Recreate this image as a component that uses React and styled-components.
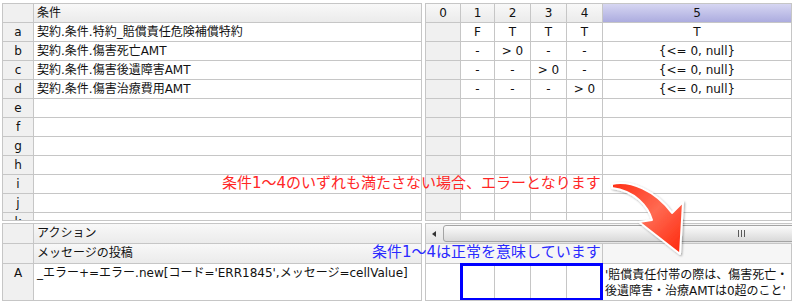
import styled, { createGlobalStyle } from "styled-components";

const GlobalStyle = createGlobalStyle`
  body {
    margin: 0;
    background: #ffffff;
    font-family: "DejaVu Sans", "Noto Sans CJK JP", sans-serif;
    font-size: 12px;
    color: #111111;
  }
`;

const LINE = "#c6c6c6";
const RULE_COLS = "35px 34px 36px 36px 36px 189px";

const conditions = [
  { key: "a", label: "契約.条件.特約_賠償責任危険補償特約", values: ["F", "T", "T", "T", "T"] },
  { key: "b", label: "契約.条件.傷害死亡AMT", values: ["-", "> 0", "-", "-", "{<= 0, null}"] },
  { key: "c", label: "契約.条件.傷害後遺障害AMT", values: ["-", "-", "> 0", "-", "{<= 0, null}"] },
  { key: "d", label: "契約.条件.傷害治療費用AMT", values: ["-", "-", "-", "> 0", "{<= 0, null}"] },
];
const emptyRows = ["e", "f", "g", "h", "i", "j", "k"];
const ruleNumbers = [0, 1, 2, 3, 4, 5];

export default function App() {
  return (
    <>
      <GlobalStyle />
      <Sheet>
        <Pane>
          <Row $cols="31px 1fr">
            <RowHead $header />
            <HeadCell>条件</HeadCell>
          </Row>
          {conditions.map((c) => (
            <Row key={c.key} $cols="31px 1fr">
              <RowHead>{c.key}</RowHead>
              <Cell>{c.label}</Cell>
            </Row>
          ))}
          {emptyRows.map((k) => (
            <Row key={k} $cols="31px 1fr">
              <RowHead>{k}</RowHead>
              <Cell />
            </Row>
          ))}
        </Pane>

        <Pane>
          <Row $cols={RULE_COLS}>
            {ruleNumbers.map((n) => (
              <HeadCell key={n} $center $active={n === 5}>
                {n}
              </HeadCell>
            ))}
          </Row>
          {conditions.map((c) => (
            <Row key={c.key} $cols={RULE_COLS}>
              <Cell $shade />
              {c.values.map((v, i) => (
                <Cell key={i} $center>
                  {v}
                </Cell>
              ))}
            </Row>
          ))}
          {emptyRows.map((k) => (
            <Row key={k} $cols={RULE_COLS}>
              <Cell $shade />
              {ruleNumbers.slice(1).map((n) => (
                <Cell key={n} />
              ))}
            </Row>
          ))}
        </Pane>

        <Pane>
          <Row $cols="31px 1fr" $height={20}>
            <RowHead $header />
            <HeadCell>アクション</HeadCell>
          </Row>
          <Row $cols="31px 1fr" $height={20}>
            <RowHead $header />
            <HeadCell>メッセージの投稿</HeadCell>
          </Row>
          <Row $cols="31px 1fr" $height={37}>
            <RowHead $top>A</RowHead>
            <Cell $top>_エラー+=エラー.new[コード='ERR1845',メッセージ=cellValue]</Cell>
          </Row>
        </Pane>

        <Pane>
          <ScrollBar>
            <ScrollArrow />
            <ScrollThumb>
              <Grip />
            </ScrollThumb>
          </ScrollBar>
          <Row $cols="177px 189px" $height={20}>
            <BandCell />
            <BandCell />
          </Row>
          <Row $cols={RULE_COLS} $height={37}>
            <Cell />
            <Selection>
              <Cell />
              <Cell />
              <Cell />
              <Cell />
            </Selection>
            <MessageCell>
              '賠償責任付帯の際は、傷害死亡・
              <br />
              後遺障害・治療AMTは0超のこと'
            </MessageCell>
          </Row>
        </Pane>

        <Note $color="#ff2626" style={{ left: 222, top: 174 }}>
          条件1～4のいずれも満たさない場合、エラーとなります
        </Note>
        <Note $color="#2a2aff" style={{ left: 372, top: 243 }}>
          条件1～4は正常を意味しています
        </Note>
        <CurvedArrow />
      </Sheet>
    </>
  );
}

function CurvedArrow() {
  return (
    <ArrowSvg width="100" height="100" viewBox="0 0 100 100">
      <defs>
        <linearGradient id="arrowFill" x1="0" y1="0" x2="1" y2="1">
          <stop offset="0" stopColor="#ff2f14" />
          <stop offset="0.5" stopColor="#ff6a52" />
          <stop offset="1" stopColor="#ff2408" />
        </linearGradient>
        <filter id="arrowShadow" x="-20%" y="-20%" width="140%" height="140%">
          <feDropShadow dx="1" dy="1" stdDeviation="1.2" floodColor="#000" floodOpacity="0.35" />
        </filter>
      </defs>
      <path
        d="M 12 14 C 30 10, 55 20, 72 43 L 83 32 L 80 84 L 39 52 L 52 50 C 48 36, 35 21, 12 18 Z"
        fill="url(#arrowFill)"
        stroke="#ffffff"
        strokeWidth="2"
        strokeLinejoin="round"
        filter="url(#arrowShadow)"
      />
    </ArrowSvg>
  );
}

const Sheet = styled.div`
  position: relative;
  display: grid;
  grid-template-columns: 420px 367px;
  grid-template-rows: 218px 78px;
  column-gap: 3px;
  row-gap: 2px;
  padding: 3px 0 0 2px;
  width: 795px;
  height: 304px;
  box-sizing: border-box;
  overflow: hidden;
`;

const Pane = styled.div`
  border-left: 1px solid ${LINE};
  border-top: 1px solid ${LINE};
  border-bottom: 1px solid ${LINE};
  overflow: hidden;
  background: #ffffff;
`;

const Row = styled.div`
  display: grid;
  grid-template-columns: ${(p) => p.$cols};
  height: ${(p) => p.$height || 19}px;
`;

const Cell = styled.div`
  box-sizing: border-box;
  border-right: 1px solid ${LINE};
  border-bottom: 1px solid ${LINE};
  padding: 0 3px;
  line-height: ${(p) => (p.$top ? "19px" : "18px")};
  white-space: nowrap;
  overflow: hidden;
  text-align: ${(p) => (p.$center ? "center" : "left")};
  background: ${(p) => (p.$shade ? "#f0f0f0" : "#ffffff")};
`;

const HeadCell = styled(Cell)`
  background: ${(p) =>
    p.$active
      ? "linear-gradient(#d6d6f2, #acacdf)"
      : "linear-gradient(#f8f8f8, #ebebeb)"};
`;

const RowHead = styled(Cell)`
  text-align: center;
  padding: 0;
  background: #f0f0f0;
`;

const BandCell = styled(Cell)`
  background: #f6f6f6;
`;

const Selection = styled.div`
  grid-column: 2 / 6;
  position: relative;
  display: grid;
  grid-template-columns: 34px 36px 36px 36px;

  &::after {
    content: "";
    position: absolute;
    inset: -1px 0 0 -1px;
    border: 3px solid #0000ff;
  }
`;

const MessageCell = styled(Cell)`
  white-space: normal;
  line-height: 16px;
  padding: 3px 2px 0;
`;

const ScrollBar = styled.div`
  display: flex;
  align-items: center;
  height: 20px;
  box-sizing: border-box;
  border-bottom: 1px solid ${LINE};
  background: linear-gradient(#f6f6f6, #e4e4e4);
`;

const ScrollArrow = styled.div`
  width: 0;
  height: 0;
  margin: 0 7px 0 6px;
  border-top: 3px solid transparent;
  border-bottom: 3px solid transparent;
  border-right: 4px solid #333333;
`;

const ScrollThumb = styled.div`
  flex: 1;
  height: 15px;
  margin-right: -4px;
  display: flex;
  align-items: center;
  justify-content: flex-end;
  padding-right: 50px;
  border: 1px solid #a4a4a4;
  border-radius: 3px;
  background: linear-gradient(#fbfbfb, #d9d9d9);
`;

const Grip = styled.div`
  width: 7px;
  height: 7px;
  background: repeating-linear-gradient(to right, #5a5a5a 0 1px, transparent 1px 3px);
`;

const Note = styled.div`
  position: absolute;
  font-size: 15px;
  line-height: 19px;
  white-space: nowrap;
  color: ${(p) => p.$color};
`;

const ArrowSvg = styled.svg`
  position: absolute;
  left: 600px;
  top: 170px;
`;
